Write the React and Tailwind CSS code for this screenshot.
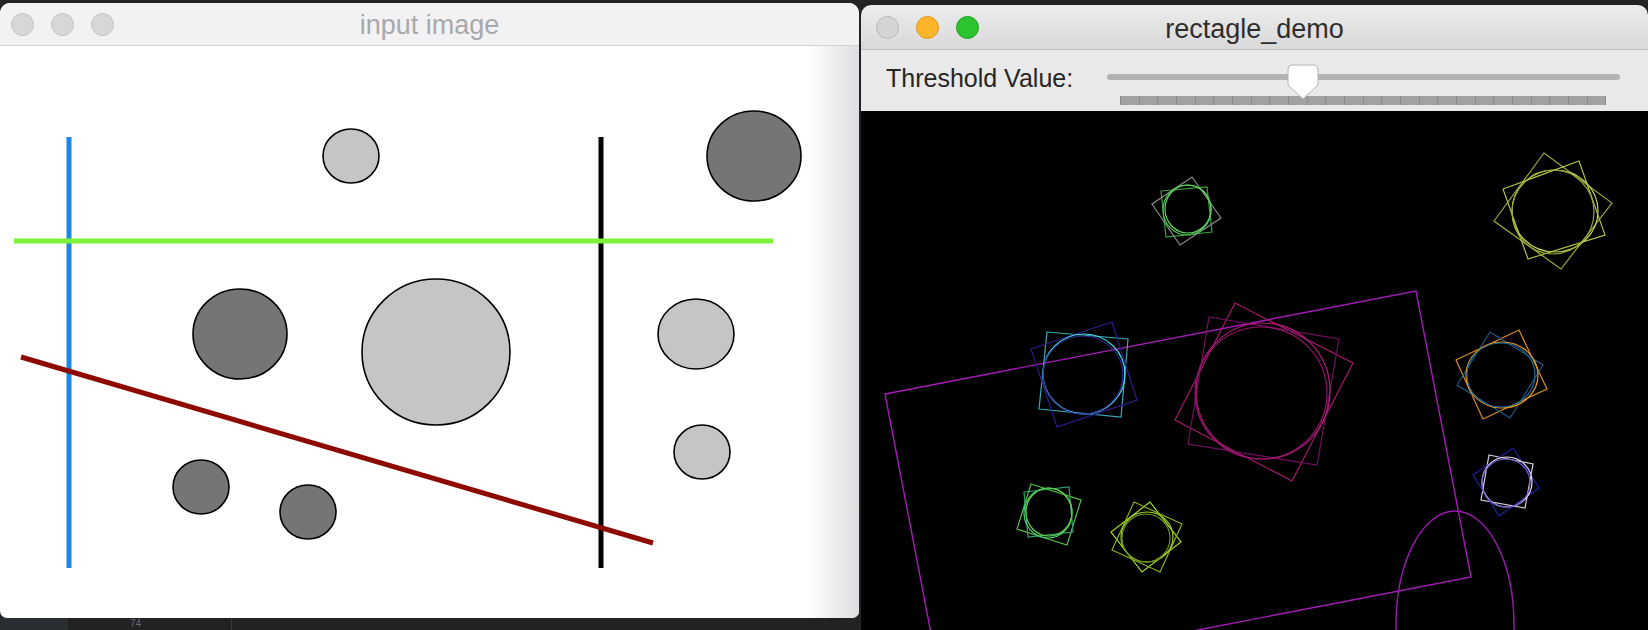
import React from 'react';

const font = { fontFamily: "'Liberation Sans', Arial, sans-serif" };

const leftCircles = [
  { cx: 351, cy: 110, rx: 28, ry: 27, dark: false },
  { cx: 754, cy: 110, rx: 47, ry: 45, dark: true },
  { cx: 240, cy: 288, rx: 47, ry: 45, dark: true },
  { cx: 436, cy: 306, rx: 74, ry: 73, dark: false },
  { cx: 696, cy: 288, rx: 38, ry: 35, dark: false },
  { cx: 702, cy: 406, rx: 28, ry: 27, dark: false },
  { cx: 201, cy: 441, rx: 28, ry: 27, dark: true },
  { cx: 308, cy: 466, rx: 28, ry: 27, dark: true },
];

// contours found on the right canvas: circle fits plus the rotated boxes around them
const shapes = [
  {
    circles: [
      { cx: 326, cy: 99, rx: 24, ry: 25, c: '#4cc04c' },
      { cx: 327, cy: 98, rx: 23, ry: 24, c: '#62d462' },
    ],
    boxes: [
      { p: '300,80 346,76 351,121 305,126', c: '#3aa040' },
      { p: '331,66 360,107 319,134 291,93', c: '#8a8a8a' },
    ],
  },
  {
    circles: [
      { cx: 694, cy: 100, rx: 43, ry: 41, c: '#c0d060' },
      { cx: 692, cy: 101, rx: 41, ry: 42, c: '#98a838' },
    ],
    boxes: [
      { p: '683,42 751,92 700,158 633,110', c: '#9aa838' },
      { p: '642,78 718,50 744,124 667,148', c: '#b0c040' },
    ],
  },
  {
    circles: [
      { cx: 223, cy: 263, rx: 41, ry: 40, c: '#48d8e8' },
      { cx: 222, cy: 264, rx: 40, ry: 39, c: '#2a2a90' },
    ],
    boxes: [
      { p: '186,221 267,228 260,306 178,298', c: '#38a8b8' },
      { p: '170,238 251,211 276,289 196,316', c: '#2c1c88' },
    ],
  },
  {
    circles: [
      { cx: 402, cy: 280, rx: 67, ry: 68, c: '#b01c78' },
      { cx: 400, cy: 282, rx: 66, ry: 66, c: '#901468' },
    ],
    boxes: [
      { p: '374,192 492,252 431,370 314,309', c: '#a8186c' },
      { p: '348,206 478,228 456,354 327,333', c: '#741060' },
    ],
  },
  {
    circles: [
      { cx: 641, cy: 264, rx: 36, ry: 33, c: '#e8961c' },
      { cx: 640, cy: 264, rx: 34, ry: 32, c: '#1c6898' },
    ],
    boxes: [
      { p: '595,249 658,219 686,278 622,308', c: '#d88a20' },
      { p: '629,221 682,254 649,307 596,274', c: '#1c5a88' },
    ],
  },
  {
    circles: [
      { cx: 646, cy: 371, rx: 25, ry: 25, c: '#e8dcec' },
      { cx: 645, cy: 372, rx: 24, ry: 24, c: '#6a58c8' },
    ],
    boxes: [
      { p: '628,344 672,353 664,397 620,389', c: '#d8ccd8' },
      { p: '652,337 678,377 638,405 612,364', c: '#2020a0' },
    ],
  },
  {
    circles: [
      { cx: 187, cy: 402, rx: 24, ry: 25, c: '#48d080' },
      { cx: 188, cy: 401, rx: 23, ry: 24, c: '#60d040' },
    ],
    boxes: [
      { p: '170,373 220,389 206,434 156,418', c: '#58c040' },
      { p: '163,381 208,376 212,421 167,426', c: '#30a070' },
    ],
  },
  {
    circles: [
      { cx: 286, cy: 426, rx: 26, ry: 25, c: '#a0d020' },
      { cx: 285, cy: 427, rx: 24, ry: 24, c: '#6a9020' },
    ],
    boxes: [
      { p: '289,391 320,431 281,461 250,421', c: '#a8e020' },
      { p: '299,461 251,439 273,391 321,413', c: '#88b018' },
    ],
  },
];

const ticks = Array.from({ length: 26 });

const Light = ({ color, border }) => (
  <span className={`block w-[23px] h-[23px] rounded-full border ${color} ${border}`} />
);

const InputWindow = () => (
  <div className="h-[615px] rounded-t-[10px] rounded-b-[7px] overflow-hidden bg-white flex flex-col">
    <div className="h-[43px] shrink-0 grid grid-cols-[1fr_auto_1fr] items-center bg-[#f2f2f4] border-b border-[#d2d2d4]">
      <div className="flex items-center gap-[17px] pl-[11px]">
        <Light color="bg-[#d7d7d9]" border="border-[#c4c4c6]" />
        <Light color="bg-[#d7d7d9]" border="border-[#c4c4c6]" />
        <Light color="bg-[#d7d7d9]" border="border-[#c4c4c6]" />
      </div>
      <div className="text-[27px] leading-none text-[#a9a9ab] pt-[2px]" style={font}>
        input image
      </div>
      <div />
    </div>
    <div className="relative flex-1">
      <svg width="859" height="572" viewBox="0 0 859 572" className="block">
        <line x1="69" y1="91" x2="69" y2="522" stroke="#1a88e6" strokeWidth="5" />
        <line x1="601" y1="91" x2="601" y2="522" stroke="#000" strokeWidth="5" />
        <line x1="14" y1="195" x2="773" y2="195" stroke="#7cf23a" strokeWidth="5" />
        {leftCircles.map((c, i) => (
          <ellipse
            key={i}
            cx={c.cx}
            cy={c.cy}
            rx={c.rx}
            ry={c.ry}
            fill={c.dark ? '#757575' : '#c5c5c5'}
            stroke="#000"
            strokeWidth="1.6"
          />
        ))}
        <line x1="21" y1="311" x2="653" y2="497" stroke="#8e0a00" strokeWidth="5" />
      </svg>
      <div className="absolute inset-y-0 right-0 w-[52px] bg-gradient-to-r from-white/0 to-[#dedee2]" />
    </div>
  </div>
);

const DemoWindow = () => (
  <div className="h-[625px] rounded-t-[10px] overflow-hidden flex flex-col bg-black">
    <div className="h-[45px] shrink-0 grid grid-cols-[1fr_auto_1fr] items-center bg-gradient-to-b from-[#ececec] to-[#d9d9d9] border-b border-[#c2c2c2]">
      <div className="flex items-center gap-[17px] pl-[15px]">
        <Light color="bg-[#d4d4d4]" border="border-[#b8b8b8]" />
        <Light color="bg-[#fcb42a]" border="border-[#dc9a1e]" />
        <Light color="bg-[#2cc230]" border="border-[#20a024]" />
      </div>
      <div className="text-[27px] leading-none text-[#2e2e2e] pt-[5px]" style={font}>
        rectagle_demo
      </div>
      <div />
    </div>
    <div className="h-[61px] shrink-0 bg-[#e9e9e9] flex">
      <div className="pl-[25px] pt-[14px] text-[25px] leading-[28px] text-[#262626]" style={font}>
        Threshold Value:
      </div>
      <div className="relative w-[513px] ml-[34px]">
        <div className="mt-[24px] h-[6px] rounded-full bg-[#b3b3b3]" />
        <div className="mt-[16px] ml-[13px] w-[486px] h-[9px] flex bg-[#a2a2a2] border-l border-[#8a8a8a]">
          {ticks.map((_, i) => (
            <span key={i} className="flex-1 border-r border-[#8a8a8a]" />
          ))}
        </div>
        <svg width="32" height="36" viewBox="0 0 32 36" className="absolute left-[180px] top-[14px]">
          <path
            d="M5 1 H27 Q31 1 31 5 V21 L16 35 L1 21 V5 Q1 1 5 1 Z"
            fill="#ffffff"
            stroke="#b4b4b4"
            strokeWidth="1"
          />
        </svg>
      </div>
    </div>
    <div className="flex-1 bg-black">
      <svg width="787" height="519" viewBox="0 0 787 519" className="block" fill="none">
        <polygon points="24,283 555,180 610,466 79,569" stroke="#a51cb8" strokeWidth="1.4" />
        <ellipse cx="594" cy="514" rx="59" ry="114" stroke="#9a1ab0" strokeWidth="1.4" />
        {shapes.map((s, i) => (
          <g key={i} strokeWidth="1.2">
            {s.boxes.map((b, j) => (
              <polygon key={j} points={b.p} stroke={b.c} />
            ))}
            {s.circles.map((c, j) => (
              <ellipse key={j} cx={c.cx} cy={c.cy} rx={c.rx} ry={c.ry} stroke={c.c} />
            ))}
          </g>
        ))}
      </svg>
    </div>
  </div>
);

export default function App() {
  return (
    <div className="w-[1648px] h-[630px] overflow-hidden bg-[#232325] flex">
      <div className="w-[859px] shrink-0 flex flex-col pt-[3px]">
        <InputWindow />
        <div className="h-[12px] flex">
          <div className="w-[68px] bg-[#2b2e30]" />
          <div className="w-[164px] bg-[#222224] border-r border-[#3c3c3e] pl-[62px] text-[10px] leading-[12px] text-[#6a6a6a]" style={font}>
            74
          </div>
          <div className="flex-1 bg-[#222224]" />
        </div>
      </div>
      <div className="flex-1 ml-[2px] pt-[5px]">
        <DemoWindow />
      </div>
    </div>
  );
}
